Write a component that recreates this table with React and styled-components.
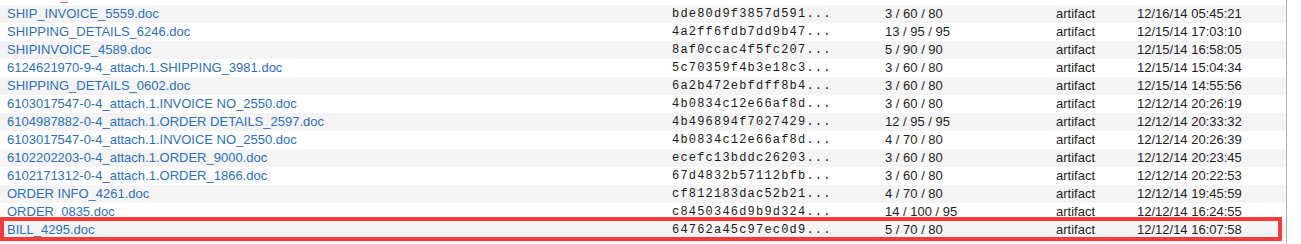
import styled, { createGlobalStyle } from 'styled-components';

const GlobalStyle = createGlobalStyle`
  html, body { margin: 0; padding: 0; background: #fff; }
  body { font-family: "Liberation Sans", Arial, sans-serif; }
`;

const Viewport = styled.div`
  width: 1287px;
  height: 244px;
  overflow: hidden;
  border-right: 1px solid #b4b4b4;
  box-sizing: border-box;
`;

const List = styled.div`
  margin-top: -13px;
  display: flex;
  flex-direction: column;
`;

const Row = styled.div`
  position: relative;
  display: grid;
  grid-template-columns: 665px 213px 171px 81px 1fr;
  padding-left: 7px;
  height: 18px;
  line-height: 18px;
  font-size: 13px;
  color: #1e1e1e;
  background: ${p => (p.$striped ? '#f4f4f4' : '#ffffff')};
  white-space: nowrap;
`;

const Name = styled.span`
  color: ${p => p.$color || '#2b70bb'};
`;

const Hash = styled.span`
  font-family: "Liberation Mono", "Courier New", monospace;
  font-size: 12px;
  letter-spacing: 1.2px;
  color: #1a1a1a;
`;

const Cell = styled.span``;

const Marker = styled.div`
  position: absolute;
  top: -4px;
  bottom: -2px;
  left: 0;
  right: 4px;
  border: 4px solid #f83c3c;
  pointer-events: none;
`;

const rows = [
  { name: 'INVOICE_7342.doc', hash: '2f31a08c9e1b47d0...', score: '4 / 70 / 80', date: '12/16/14 06:12:40', color: '#d8506a' },
  { name: 'SHIP_INVOICE_5559.doc', hash: 'bde80d9f3857d591...', score: '3 / 60 / 80', date: '12/16/14 05:45:21' },
  { name: 'SHIPPING_DETAILS_6246.doc', hash: '4a2ff6fdb7dd9b47...', score: '13 / 95 / 95', date: '12/15/14 17:03:10' },
  { name: 'SHIPINVOICE_4589.doc', hash: '8af0ccac4f5fc207...', score: '5 / 90 / 90', date: '12/15/14 16:58:05' },
  { name: '6124621970-9-4_attach.1.SHIPPING_3981.doc', hash: '5c70359f4b3e18c3...', score: '3 / 60 / 80', date: '12/15/14 15:04:34' },
  { name: 'SHIPPING_DETAILS_0602.doc', hash: '6a2b472ebfdff8b4...', score: '3 / 60 / 80', date: '12/15/14 14:55:56' },
  { name: '6103017547-0-4_attach.1.INVOICE NO_2550.doc', hash: '4b0834c12e66af8d...', score: '3 / 60 / 80', date: '12/12/14 20:26:19' },
  { name: '6104987882-0-4_attach.1.ORDER DETAILS_2597.doc', hash: '4b496894f7027429...', score: '12 / 95 / 95', date: '12/12/14 20:33:32' },
  { name: '6103017547-0-4_attach.1.INVOICE NO_2550.doc', hash: '4b0834c12e66af8d...', score: '4 / 70 / 80', date: '12/12/14 20:26:39' },
  { name: '6102202203-0-4_attach.1.ORDER_9000.doc', hash: 'ecefc13bddc26203...', score: '3 / 60 / 80', date: '12/12/14 20:23:45' },
  { name: '6102171312-0-4_attach.1.ORDER_1866.doc', hash: '67d4832b57112bfb...', score: '3 / 60 / 80', date: '12/12/14 20:22:53' },
  { name: 'ORDER INFO_4261.doc', hash: 'cf812183dac52b21...', score: '4 / 70 / 80', date: '12/12/14 19:45:59' },
  { name: 'ORDER_0835.doc', hash: 'c8450346d9b9d324...', score: '14 / 100 / 95', date: '12/12/14 16:24:55' },
  { name: 'BILL_4295.doc', hash: '64762a45c97ec0d9...', score: '5 / 70 / 80', date: '12/12/14 16:07:58', marked: true },
];

export default function App() {
  return (
    <>
      <GlobalStyle />
      <Viewport>
        <List>
          {rows.map((r, i) => (
            <Row key={i} $striped={i % 2 === 1}>
              <Name $color={r.color}>{r.name}</Name>
              <Hash>{r.hash}</Hash>
              <Cell>{r.score}</Cell>
              <Cell>artifact</Cell>
              <Cell>{r.date}</Cell>
              {r.marked && <Marker />}
            </Row>
          ))}
        </List>
      </Viewport>
    </>
  );
}
